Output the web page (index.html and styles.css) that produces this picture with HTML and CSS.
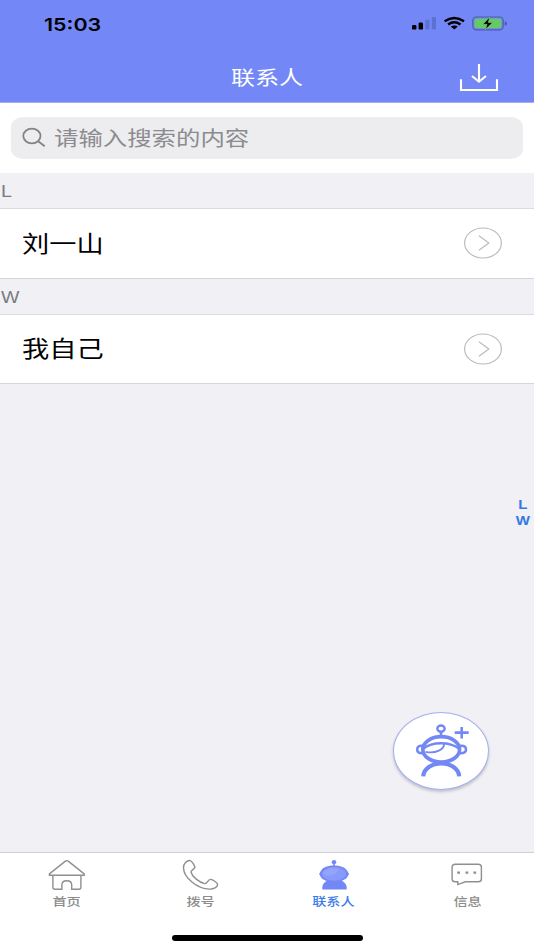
FILE: index.html
```html
<!DOCTYPE html>
<html lang="zh-CN">

<head>
  <meta charset="UTF-8">
  <meta name="viewport" content="width=device-width, initial-scale=1.0">
  <title>联系人</title>
  <link rel="stylesheet" href="styles.css">
</head>

<body>
  <header>
    <div class="status-bar">
      <span class="time wide">15:03</span>
      <svg class="status-icons" width="98" height="18" viewBox="410 14 98 18">
        <rect x="412" y="25" width="4.4" height="4.6" rx="1.2" />
        <rect x="418.6" y="22.6" width="4.4" height="7" rx="1.2" />
        <rect x="425.3" y="19.8" width="4.2" height="9.8" rx="1" fill="#5d70d4" />
        <rect x="431.8" y="17" width="4.2" height="12.6" rx="1" fill="#5d70d4" />
        <g fill="none" stroke="#000" stroke-width="2.5">
          <path d="M444.6 21.2Q454.3 14.6 464 21.2" />
          <path d="M448.1 24.5Q454.3 20.2 460.5 24.5" />
        </g>
        <path d="M450.8 26.6Q454.3 24.4 457.8 26.6L454.3 29.6Z" />
        <rect x="472.8" y="17" width="30.4" height="12.8" rx="3.6" fill="none" stroke="#4c5d9c" stroke-width="1.2" />
        <rect x="474.7" y="18.7" width="26.6" height="9.4" rx="2" fill="#65c966" />
        <path d="M504.7 21.2Q507 21.5 507 23.4T504.7 25.7Z" fill="#4c5d9c" />
        <path d="M489.8 17L482.7 24.3H487L485.3 29.7L492.8 22.4H488.4Z" stroke="#65c966" stroke-width=".8" />
      </svg>
    </div>
    <div class="nav-bar">
      <h1 class="wide">联系人</h1>
      <svg class="download" width="40" height="30" viewBox="459 63 40 30">
        <path d="M461 79.2V90H497V79.2M479 64V81.5M472 76L479 81.7L486 76" />
      </svg>
    </div>
  </header>

  <main>
    <div class="search">
      <div class="search-box">
        <svg width="26" height="22" viewBox="21 127 26 22">
          <ellipse cx="31.9" cy="136" rx="8.6" ry="7.4" />
          <path d="M38.2 141.2L44.7 146.3" />
        </svg>
        <span class="placeholder wide">请输入搜索的内容</span>
      </div>
    </div>

    <section class="group">
      <div class="letter"><span class="wide">L</span></div>
      <div class="contact">
        <span class="name wide">刘一山</span>
        <svg width="40" height="32" viewBox="0 0 40 32">
          <ellipse cx="20" cy="16" rx="18.4" ry="15" />
          <path d="M16 8.7L25.8 16L16 23.3" />
        </svg>
      </div>
    </section>
    <section class="group">
      <div class="letter"><span class="wide">W</span></div>
      <div class="contact">
        <span class="name wide">我自己</span>
        <svg width="40" height="32" viewBox="0 0 40 32">
          <ellipse cx="20" cy="16" rx="18.4" ry="15" />
          <path d="M16 8.7L25.8 16L16 23.3" />
        </svg>
      </div>
    </section>
  </main>

  <!-- 字母索引 -->
  <div class="index-list">
    <span>L</span>
    <span>W</span>
  </div>

  <!-- 添加联系人 -->
  <div class="add-btn">
    <svg width="60" height="60" viewBox="411 721 60 60">
      <g fill="none" stroke="#7388f3">
        <ellipse cx="441" cy="728.6" rx="3.7" ry="3.1" stroke-width="2.4" />
        <path d="M441 731.5V737" stroke-width="2.6" />
        <ellipse cx="441.2" cy="749.4" rx="18.4" ry="12.7" stroke-width="3.7" />
        <path d="M423.5 748.5Q430 743.2 441 743.2T459 748.5" stroke-width="2.6" />
        <path d="M444 744C444.5 749 436 754 425.5 751.8" stroke-width="1.8" />
        <path d="M422.3 745.9Q417.2 745.3 417.2 749.4T422.5 753.2M460.2 745.9Q466 745.3 466 749.4T460 753.2" stroke-width="2.6" />
        <path d="M423.2 776.4C424.5 759.2 458 759.2 459.2 776.4" stroke-width="4.2" />
        <path d="M461.7 726.9V738.4M454.7 732.6H468.7" stroke-width="2.6" />
      </g>
    </svg>
  </div>

  <footer>
    <nav>
      <a class="tab">
        <svg width="40" height="34" viewBox="47 858 40 34">
          <path d="M52.9 875.2H49.4V873.9L65.4 861.1Q66.8 860.1 68.2 861.1L84.2 873.9V875.2H52.9V887.3Q52.9 889.3 55 889.3H61.9V884.6Q62.2 880.8 66.8 880.8T71.7 884.6V889.3H78.8Q80.9 889.3 80.9 887.3V875.2" />
        </svg>
        <span class="wide">首页</span>
      </a>
      <a class="tab">
        <svg width="40" height="34" viewBox="180 858 40 34">
          <path d="M183.5 868C183.3 863 187.5 860.2 190.2 860.6C192 861 194.5 865.5 195 867.2C194.8 869 191 870 191 872C192 876.5 198.5 882 204.6 883.6C207.5 884 207.5 879.8 210.5 879.4C212.5 879.3 217.5 882.8 217.6 884.5C217.5 887.3 213.5 889.3 209.5 889.1C197 889 183.8 877.5 183.5 868Z" />
        </svg>
        <span class="wide">拨号</span>
      </a>
      <a class="tab active">
        <svg class="robot" width="40" height="34" viewBox="313.5 858 40 34">
          <ellipse cx="333.5" cy="862.2" rx="2.3" ry="2.1" />
          <rect x="332.7" y="863" width="1.6" height="4" />
          <path d="M320.6 870.5C324 863.7 343 863.7 346.5 870.5L348.6 874L346.5 877.5C343 883.2 324 883.2 320.6 877.5L318.6 874Z" />
          <path d="M321.8 889.5V887C322.5 882.5 327 879 333.8 879S345.5 882.5 346.2 887V889.5Z" />
          <ellipse cx="333.5" cy="873.9" rx="12" ry="6.9" fill="#8799fa" />
          <path d="M322.6 874C324 868 332 867 338 868.8C337 874 329 878.5 322.6 874Z" fill="#94a4fb" />
        </svg>
        <span class="wide">联系人</span>
      </a>
      <a class="tab">
        <svg width="40" height="34" viewBox="447 858 40 34">
          <path d="M455.3 864.3H478.2Q481.4 864.3 481.4 867.1V879Q481.4 881.8 478.2 881.8H465.3L457.8 884.6V881.8H455.3Q452.1 881.8 452.1 879V867.1Q452.1 864.3 455.3 864.3Z" />
          <path class="dots" d="M457.2 872.7H460M465.5 872.7H468.3M473.4 872.7H476.2" />
        </svg>
        <span class="wide">信息</span>
      </a>
    </nav>
    <div class="home-bar"></div>
  </footer>
</body>

</html>
```
FILE: styles.css
```css
* {
  box-sizing: border-box;
  margin: 0;
  padding: 0;
}

body {
  display: flex;
  flex-direction: column;
  height: 950px;
  position: relative;
  overflow: hidden;
  background: #f0f0f5;
  font-family: "Liberation Sans", "Noto Sans CJK SC", sans-serif;
}

svg {
  display: block;
  flex: none;
}

/* 横向拉宽的文字 */
.wide {
  display: inline-block;
  white-space: nowrap;
  transform: scaleX(1.22);
}

header {
  height: 103px;
  background: #7388f6;
  border-bottom: 1px solid #a3b0ee;
}

.status-bar {
  display: flex;
  justify-content: space-between;
  align-items: center;
  height: 46px;
  padding: 0 26px 0 44px;
}

.time {
  padding-top: 2px;
  font-family: Inter, sans-serif;
  font-size: 17.6px;
  font-weight: 600;
  transform-origin: left;
}

.nav-bar {
  display: grid;
  grid-template-columns: 75px 1fr 75px;
  align-items: center;
  height: 56px;
  padding-top: 8px;
}

.nav-bar h1 {
  grid-column: 2;
  text-align: center;
  font-size: 19.7px;
  font-weight: 400;
  line-height: 30px;
  color: #fff;
}

.download {
  fill: none;
  stroke: #fff;
  stroke-width: 2.1;
}

main {
  flex: 1;
}

.search {
  height: 70px;
  padding: 14px 11px;
  background: #fff;
}

.search-box {
  display: flex;
  align-items: center;
  height: 42px;
  padding-left: 10px;
  border-radius: 12px / 10px;
  background: #ededef;
}

.search-box svg {
  fill: none;
  stroke: #838387;
  stroke-width: 1.8;
}

.placeholder {
  margin-left: 7px;
  padding-bottom: 2px;
  font-size: 20px;
  color: #8b8b90;
  transform-origin: left;
}

.letter {
  height: 35px;
  padding-left: 1px;
  line-height: 37px;
  font-size: 16px;
  color: #7c7c80;
}

.letter span {
  transform-origin: left;
}

.contact {
  display: flex;
  justify-content: space-between;
  align-items: center;
  height: 70.5px;
  padding: 0 31px 0 21.5px;
  background: #fff;
  border-top: 1px solid #dcdce0;
  border-bottom: 1px solid #d6d6da;
}

.name {
  padding-bottom: 3px;
  font-size: 22.3px;
  color: #000;
  transform-origin: left;
}

.contact svg {
  fill: none;
  stroke: #bcbcbc;
  stroke-width: 1.2;
}

.index-list {
  display: flex;
  flex-direction: column;
  align-items: center;
  position: absolute;
  right: 3px;
  top: 497px;
  width: 16px;
  font-size: 12.5px;
  font-weight: 700;
  line-height: 16px;
  color: #3478e5;
}

.index-list span {
  transform: scaleX(1.2);
}

.add-btn {
  display: flex;
  justify-content: center;
  align-items: center;
  position: absolute;
  left: 393px;
  top: 712px;
  width: 96px;
  height: 78px;
  border: 1px solid #a4b0ec;
  border-radius: 50%;
  background: #fff;
  box-shadow: 0 2px 3px rgba(80, 80, 110, .3);
}

footer {
  height: 98px;
  background: #fff;
  border-top: 1px solid #cfcfd3;
}

nav {
  display: flex;
  height: 81.5px;
  padding-top: 5px;
}

.tab {
  flex: 1;
  display: flex;
  flex-direction: column;
  align-items: center;
  font-size: 11.6px;
  font-weight: 500;
  line-height: 19px;
  color: #8c8c8c;
}

.tab svg {
  fill: none;
  stroke: #8f8f8f;
  stroke-width: 1.4;
}

.tab .dots {
  stroke-width: 2.2;
}

.tab .robot {
  fill: #7388f6;
  stroke: none;
}

.tab.active {
  color: #3b7bea;
}

.home-bar {
  width: 191px;
  height: 6px;
  margin: 0 auto;
  border-radius: 3px;
  background: #000;
}
```
